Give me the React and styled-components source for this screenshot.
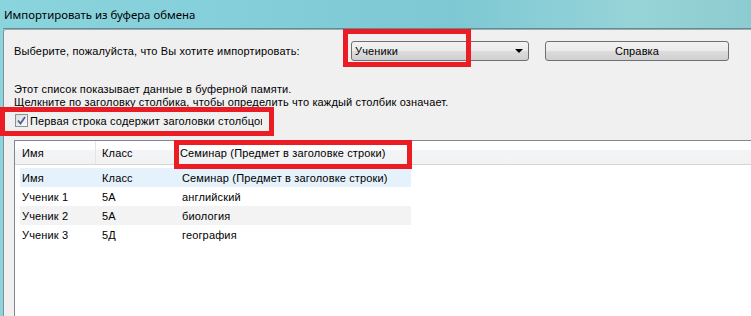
import styled, { createGlobalStyle } from "styled-components";

const GlobalStyle = createGlobalStyle`
  html, body {
    margin: 0;
    padding: 0;
    overflow: hidden;
  }
  body {
    font-family: "Liberation Sans", Arial, sans-serif;
    font-size: 11px;
    letter-spacing: 0.15px;
    color: #000;
  }
`;

const headers = ["Имя", "Класс", "Семинар (Предмет в заголовке строки)"];

const rows = [
    ["Имя", "Класс", "Семинар (Предмет в заголовке строки)"],
    ["Ученик 1", "5A", "английский"],
    ["Ученик 2", "5A", "биология"],
    ["Ученик 3", "5Д", "география"],
];

const rowColors = ["#e5f1fb", "#ffffff", "#f3f3f3", "#ffffff"];

const App = () => {
    return (
        <>
            <GlobalStyle />
            <Window>
                <TitleBar>Импортировать из буфера обмена</TitleBar>
                <Body>
                    <TopRow>
                        <Label>Выберите, пожалуйста, что Вы хотите импортировать:</Label>
                        <Marked>
                            <Combo>
                                <span>Ученики</span>
                                <Arrow />
                            </Combo>
                            <RedBox $left={-8} $top={-12} $width={128} $height={38} />
                        </Marked>
                        <Button>Справка</Button>
                    </TopRow>

                    <Info>
                        Этот список показывает данные в буферной памяти.
                        <br />
                        Щелкните по заголовку столбика, чтобы определить что каждый столбик означает.
                    </Info>

                    <CheckRow>
                        <Box>
                            <svg width="9" height="9" viewBox="0 0 9 9">
                                <path
                                    d="M1 4.5 L3.5 7.5 L8 1"
                                    fill="none"
                                    stroke="#4a5f9a"
                                    strokeWidth="1.8"
                                />
                            </svg>
                        </Box>
                        {/* the label is clipped by its box in the original dialog */}
                        <CheckLabel>Первая строка содержит заголовки столбцов</CheckLabel>
                        <RedBox $left={-14} $top={-7} $width={274} $height={29} />
                    </CheckRow>

                    <List>
                        <Header>
                            <HeadCell $width={81} $pad={7}>{headers[0]}</HeadCell>
                            <HeadCell $width={79} $pad={6}>{headers[1]}</HeadCell>
                            <HeadCell $width={237} $pad={5} $last>
                                {headers[2]}
                                <RedBox $left={-1} $top={-1} $width={238} $height={29} />
                            </HeadCell>
                            <HeadFill />
                        </Header>
                        <Rows>
                            {rows.map((row, i) => (
                                <Row key={i} $bg={rowColors[i]}>
                                    <Cell $width={80}>{row[0]}</Cell>
                                    <Cell $width={80}>{row[1]}</Cell>
                                    <Cell $width={231}>{row[2]}</Cell>
                                </Row>
                            ))}
                        </Rows>
                    </List>
                </Body>
            </Window>
        </>
    );
};

export default App;

const Window = styled.div`
    width: 751px;
    height: 316px;
    display: flex;
    flex-direction: column;
    padding-left: 3px;
    box-sizing: border-box;
    background: linear-gradient(
        to right,
        #8ad4de 0%,
        #84cfd9 30%,
        #7dc8d3 60%,
        #97d4d8 85%,
        #8ccbcf 100%
    );
`;

const TitleBar = styled.div`
    height: 28px;
    flex-shrink: 0;
    display: flex;
    align-items: center;
    padding-left: 1px;
    font-family: "Noto Sans", "Open Sans", sans-serif;
    font-size: 11.4px;
    letter-spacing: 0;
    color: #000;
    border-bottom: 1px solid #5c8d90;
`;

const Body = styled.div`
    flex: 1;
    display: flex;
    flex-direction: column;
    background: #f0f0f0;
    border-left: 1px solid #8a8d93;
    border-top: 1px solid #a3aaaf;
    border-top-left-radius: 3px;
    padding-left: 10px;
    min-height: 0;
`;

const TopRow = styled.div`
    display: flex;
    align-items: center;
    height: 20px;
    margin-top: 11px;
`;

const Label = styled.span`
    width: 337px;
    flex-shrink: 0;
    white-space: nowrap;
`;

const Marked = styled.div`
    position: relative;
`;

const RedBox = styled.div`
    position: absolute;
    left: ${(p) => p.$left}px;
    top: ${(p) => p.$top}px;
    width: ${(p) => p.$width}px;
    height: ${(p) => p.$height}px;
    border: 5px solid #ec1c24;
    box-sizing: border-box;
    pointer-events: none;
`;

const Combo = styled.div`
    width: 178px;
    height: 20px;
    box-sizing: border-box;
    border: 1px solid #707070;
    border-radius: 3px;
    background: linear-gradient(#f2f2f2 0%, #ebebeb 50%, #dddddd 51%, #cfcfcf 100%);
    display: flex;
    align-items: center;
    justify-content: space-between;
    padding: 0 5px 0 3px;
`;

const Arrow = styled.span`
    width: 0;
    height: 0;
    border-left: 4px solid transparent;
    border-right: 4px solid transparent;
    border-top: 4px solid #000;
`;

const Button = styled.button`
    width: 184px;
    height: 20px;
    margin-left: 16px;
    box-sizing: border-box;
    border: 1px solid #707070;
    border-radius: 3px;
    background: linear-gradient(#f2f2f2 0%, #ebebeb 50%, #dddddd 51%, #cfcfcf 100%);
    font: inherit;
    letter-spacing: inherit;
    color: #000;
    padding: 0;
`;

const Info = styled.div`
    margin-top: 22px;
    line-height: 13px;
    color: #000;
    white-space: nowrap;
`;

const CheckRow = styled.div`
    position: relative;
    display: flex;
    align-items: center;
    margin-top: 5px;
    height: 13px;
    padding-left: 1px;
`;

const Box = styled.div`
    width: 13px;
    height: 13px;
    box-sizing: border-box;
    border: 1px solid #8e8f8f;
    background: linear-gradient(135deg, #dcdcdc, #fafafa);
    display: flex;
    align-items: center;
    justify-content: center;
`;

const CheckLabel = styled.span`
    margin-left: 2px;
    width: 232px;
    white-space: nowrap;
    overflow: hidden;
`;

const List = styled.div`
    flex: 1;
    margin-top: 13px;
    border-left: 1px solid #828790;
    border-top: 1px solid #828790;
    background: #fff;
    display: flex;
    flex-direction: column;
`;

const Header = styled.div`
    display: flex;
    height: 23px;
    border-bottom: 1px solid #d5d5d5;
`;

const HeadCell = styled.div`
    position: relative;
    width: ${(p) => p.$width}px;
    flex-shrink: 0;
    box-sizing: border-box;
    padding-left: ${(p) => p.$pad}px;
    display: flex;
    align-items: center;
    white-space: nowrap;
    background: linear-gradient(#ffffff 0%, #ffffff 40%, #f3f4f6 41%, #f1f2f4 100%);
    border-right: ${(p) => (p.$last ? "none" : "1px solid #e3e4e6")};
`;

const HeadFill = styled.div`
    flex: 1;
    background: linear-gradient(#ffffff 0%, #ffffff 40%, #f3f4f6 41%, #f1f2f4 100%);
`;

const Rows = styled.div`
    display: flex;
    flex-direction: column;
    padding: 3px 0 0 5px;
`;

const Row = styled.div`
    display: flex;
    height: 19px;
    align-items: center;
    background: ${(p) => p.$bg};
    width: 391px;
`;

const Cell = styled.div`
    width: ${(p) => p.$width}px;
    padding-left: 2px;
    box-sizing: border-box;
    white-space: nowrap;
`;
